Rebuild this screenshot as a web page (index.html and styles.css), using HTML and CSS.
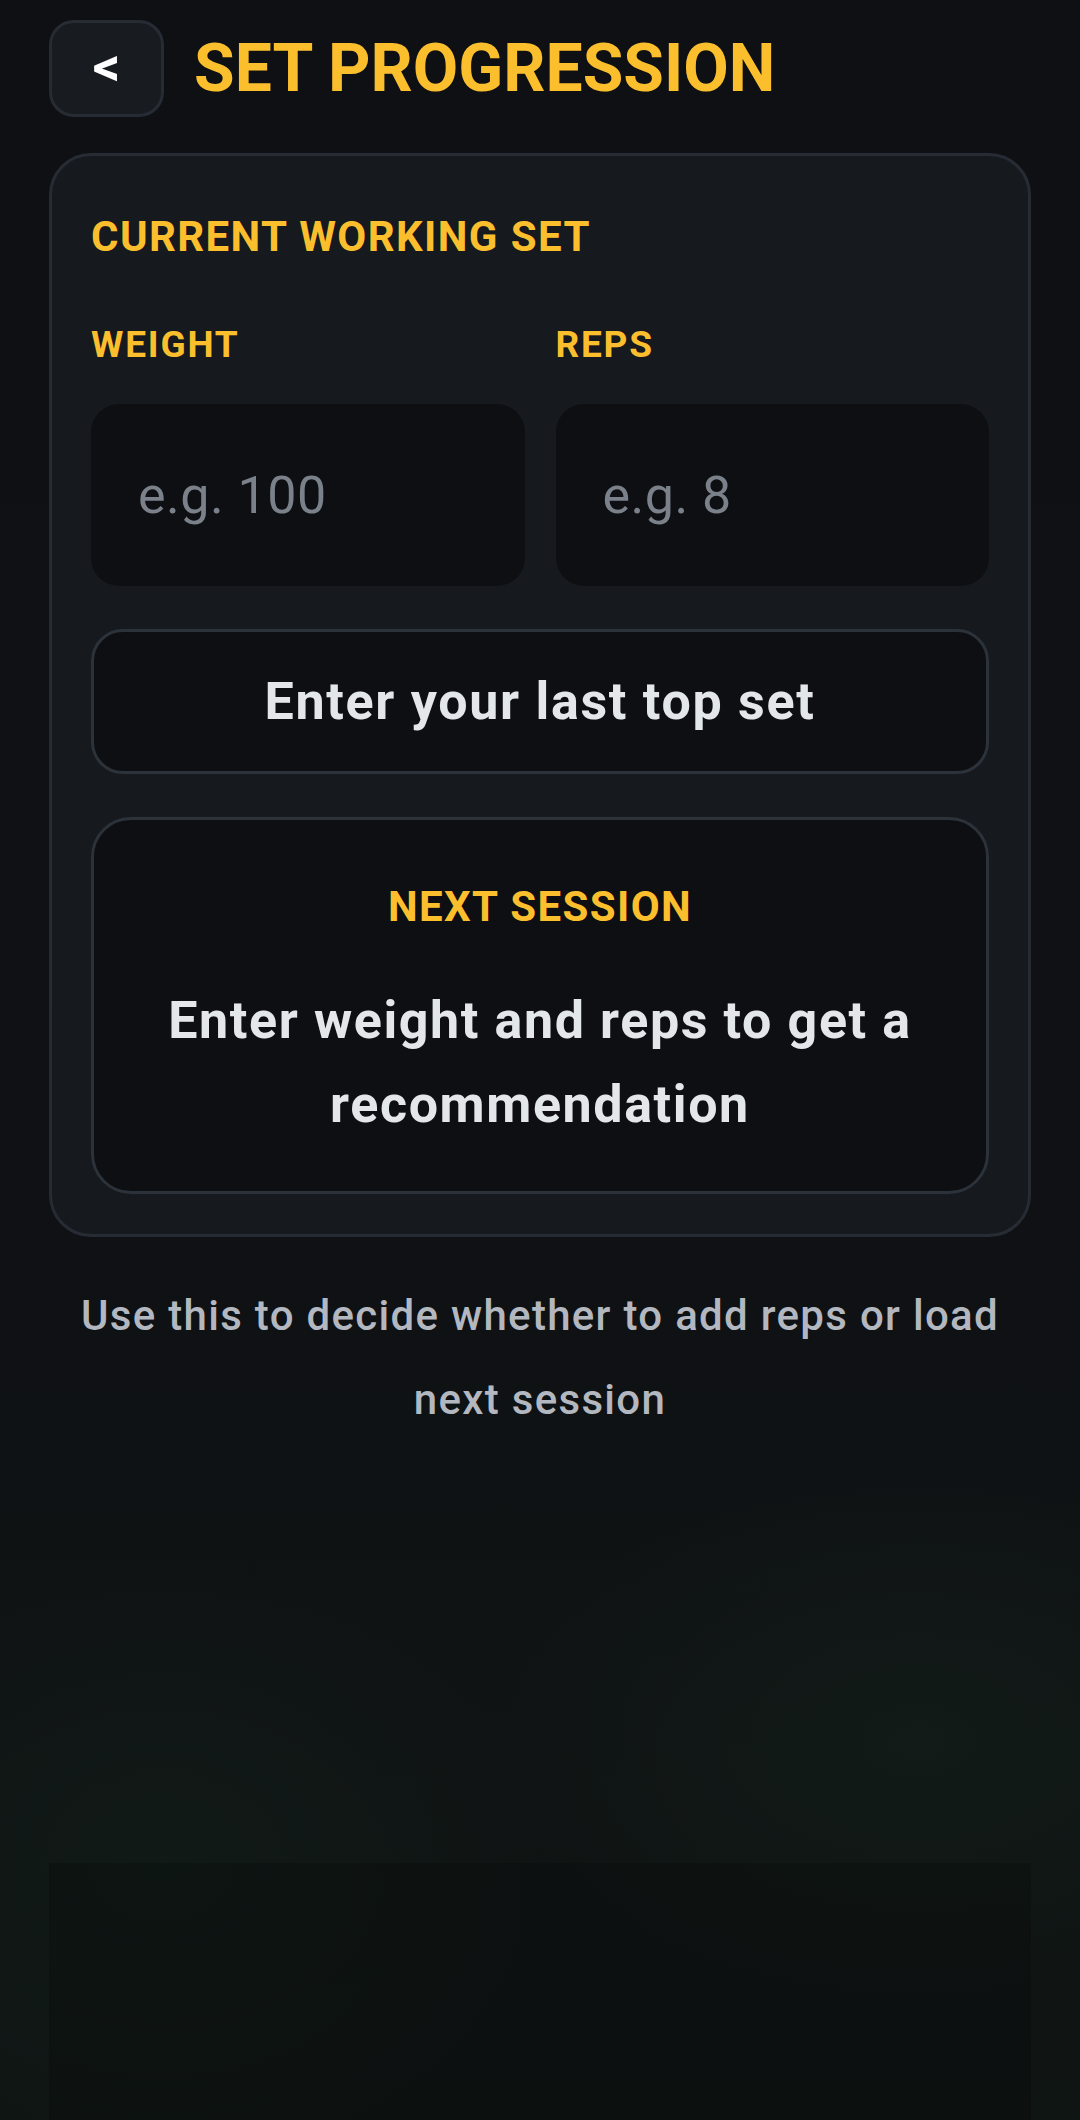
FILE: index.html
```html
<!DOCTYPE html>
<html lang="en">
  <head>
    <meta charset="UTF-8" />
    <meta name="viewport" content="width=device-width, initial-scale=1.0" />
    <title>Set Progression</title>
    <link rel="stylesheet" href="styles.css">
  </head>
  <body>
    <div class="screen">
      <header class="top-bar">
        <button class="back-btn" aria-label="Go back">&lt;</button>
        <h1 class="page-title">SET PROGRESSION</h1>
      </header>

      <section class="card">
        <h2 class="card-title">CURRENT WORKING SET</h2>
        <div class="fields">
          <label class="field">
            <span class="field-label">WEIGHT</span>
            <input type="text" inputmode="decimal" placeholder="e.g. 100" />
          </label>
          <label class="field">
            <span class="field-label">REPS</span>
            <input type="text" inputmode="numeric" placeholder="e.g. 8" />
          </label>
        </div>
        <button class="submit-btn">Enter your last top set</button>
        <div class="next-box">
          <h3 class="next-title">NEXT SESSION</h3>
          <p class="next-text">Enter weight and reps to get a recommendation</p>
        </div>
      </section>

      <p class="hint">Use this to decide whether to add reps or load next session</p>

      <div class="dock"></div>
    </div>
  </body>
</html>
```

FILE: styles.css
```css
:root {
  --accent: #fbbf2e;
  --page-bg: #0e1013;
  --card-bg: #161a1f;
  --field-bg: #0d0f12;
  --border: #272c34;
  --border-strong: #2c323a;
  --text: #e4e7ea;
  --muted: #b3b8c0;
  --placeholder: #7b818a;
}

* {
  box-sizing: border-box;
}

body {
  margin: 0;
  font-family: Roboto, "Liberation Sans", sans-serif;
  color: var(--text);
  background:
    radial-gradient(ellipse 420px 260px at 85% 82%, rgba(30, 60, 42, 0.18), transparent),
    radial-gradient(ellipse 380px 300px at 15% 88%, rgba(28, 56, 40, 0.16), transparent),
    linear-gradient(180deg, #0e1013 0%, #0f1114 55%, #0f1513 100%);
}

.screen {
  display: flex;
  flex-direction: column;
  min-height: 2120px;
  padding: 20px 49px 0;
}

.top-bar {
  display: flex;
  align-items: center;
  gap: 30px;
}

.back-btn {
  width: 115px;
  height: 97px;
  border: 3px solid var(--border);
  border-radius: 25px;
  background: #181b20;
  color: #ffffff;
  font-family: Roboto, sans-serif;
  font-size: 54px;
  font-weight: 700;
  line-height: 1;
  padding: 0 0 4px;
  cursor: pointer;
}

.page-title {
  margin: 0;
  color: var(--accent);
  font-size: 66px;
  font-weight: 700;
  line-height: 1;
}

.card {
  margin-top: 36px;
  background: var(--card-bg);
  border: 3px solid var(--border);
  border-radius: 42px;
  padding: 56px 39px 40px;
}

.card-title {
  margin: 0 0 61px;
  color: var(--accent);
  font-size: 42px;
  font-weight: 700;
  letter-spacing: 1.4px;
  line-height: 50px;
}

.fields {
  display: grid;
  grid-template-columns: 1fr 1fr;
  column-gap: 31px;
}

.field {
  display: flex;
  flex-direction: column;
  gap: 37px;
}

.field-label {
  color: var(--accent);
  font-size: 37px;
  font-weight: 700;
  letter-spacing: 1.8px;
  line-height: 44px;
}

.field input {
  width: 100%;
  height: 182px;
  border: none;
  border-radius: 28px;
  background: var(--field-bg);
  padding: 0 47px;
  color: var(--text);
  font-family: Roboto, sans-serif;
  font-size: 52px;
  letter-spacing: 0.5px;
  outline: none;
}

.field input::placeholder {
  color: var(--placeholder);
}

.submit-btn {
  display: block;
  width: 100%;
  height: 145px;
  margin-top: 43px;
  border: 3px solid var(--border-strong);
  border-radius: 32px;
  background: var(--field-bg);
  color: var(--text);
  font-family: Roboto, sans-serif;
  font-size: 52px;
  font-weight: 700;
  letter-spacing: 1.7px;
  cursor: pointer;
}

.next-box {
  margin-top: 43px;
  border: 3px solid var(--border-strong);
  border-radius: 40px;
  background: var(--field-bg);
  padding: 62px 40px 44px;
  text-align: center;
}

.next-title {
  margin: 0 0 47px;
  color: var(--accent);
  font-size: 42px;
  font-weight: 700;
  letter-spacing: 1.4px;
  line-height: 50px;
}

.next-text {
  margin: 0;
  font-size: 52px;
  font-weight: 700;
  letter-spacing: 1.6px;
  line-height: 84px;
}

.hint {
  margin: 37px 0 0;
  color: var(--muted);
  font-size: 42px;
  font-weight: 500;
  letter-spacing: 1.3px;
  line-height: 84px;
  text-align: center;
}

.dock {
  margin-top: auto;
  height: 257px;
  background: rgba(8, 10, 11, 0.3);
}
```
